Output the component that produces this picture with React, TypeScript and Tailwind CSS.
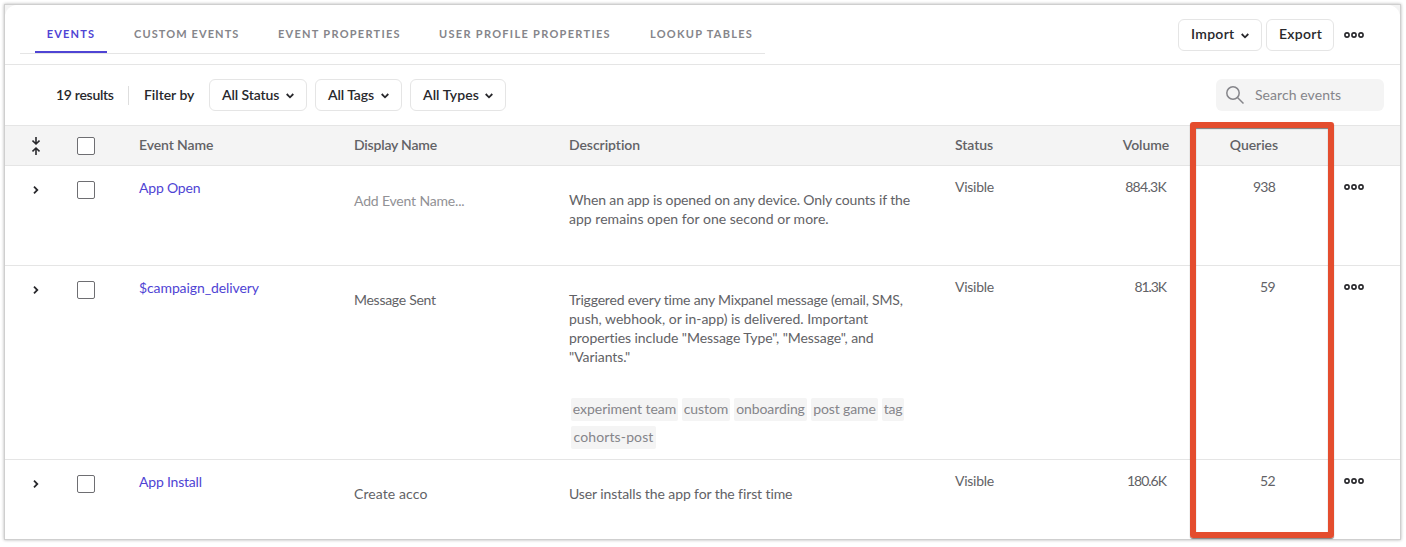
import type { ReactNode } from "react";

const GRID =
  "grid grid-cols-[72px_62px_215px_215px_386px_214px_109px_1fr] leading-[19px]";

function Down() {
  return (
    <svg className="mt-[2px]" width="8" height="6" viewBox="0 0 8 6" fill="none" stroke="#28282c" strokeWidth="1.8">
      <path d="M.7 1 4 4.3 7.3 1" />
    </svg>
  );
}

function Right() {
  return (
    <svg width="6" height="8" viewBox="0 0 6 8" fill="none" stroke="#28282c" strokeWidth="1.8">
      <path d="M1 .7 4.3 4 1 7.3" />
    </svg>
  );
}

function Dots() {
  return (
    <svg width="20" height="6" viewBox="0 0 20 6" fill="none" stroke="#28282c" strokeWidth="1.6">
      <circle cx="3" cy="3" r="2.1" />
      <circle cx="10" cy="3" r="2.1" />
      <circle cx="17" cy="3" r="2.1" />
    </svg>
  );
}

function Collapse() {
  return (
    <svg width="8" height="18" viewBox="0 0 8 18" fill="none" stroke="#28282c" strokeWidth="1.6">
      <path d="M4 0v6.6M.5 3.6 4 7l3.5-3.4M4 18v-6.6M.5 14.4 4 11l3.5 3.4" />
    </svg>
  );
}

function Checkbox() {
  return <span className="block size-[18px] rounded-[2px] border border-[#6e6e72] bg-white" />;
}

function Button({ children, className }: { children: ReactNode; className: string }) {
  return (
    <button
      className={`flex h-8 shrink-0 items-center justify-between rounded-md border border-[#e5e5e5] bg-white px-3 font-semibold whitespace-nowrap text-[#28282c] ${className}`}
    >
      {children}
    </button>
  );
}

const tabs = [
  { label: "EVENTS", className: "w-[72px] mr-[27px] tracking-[1.2px]" },
  { label: "CUSTOM EVENTS", className: "w-[105px] mr-[39px] tracking-[1.1px]" },
  { label: "EVENT PROPERTIES", className: "w-[122px] mr-[39px] tracking-[1.27px]" },
  { label: "USER PROFILE PROPERTIES", className: "w-[172px] mr-[39px] tracking-[1.3px]" },
  { label: "LOOKUP TABLES", className: "w-[103px] tracking-[1.27px]" },
];

interface Label {
  text: string;
  className: string;
}

interface Row {
  name: Label;
  display: Label;
  lines: Label[];
  tags: Label[];
  volume: Label;
  queries: Label;
  className: string;
}

const rows: Row[] = [
  {
    name: { text: "App Open", className: "tracking-[-0.2px]" },
    display: { text: "Add Event Name...", className: "pt-[25px] tracking-[-0.17px] text-[#919195]" },
    lines: [
      { text: "When an app is opened on any device. Only counts if the", className: "tracking-[-0.136px]" },
      { text: "app remains open for one second or more.", className: "tracking-[0.03px]" },
    ],
    tags: [],
    volume: { text: "884.3K", className: "tracking-[-0.7px]" },
    queries: { text: "938", className: "tracking-[-0.8px]" },
    className: "h-[100px] border-b",
  },
  {
    name: { text: "$campaign_delivery", className: "tracking-[-0.1px]" },
    display: { text: "Message Sent", className: "pt-6 tracking-[-0.28px]" },
    lines: [
      { text: "Triggered every time any Mixpanel message (email, SMS,", className: "tracking-[-0.19px]" },
      { text: "push, webhook, or in-app) is delivered. Important", className: "tracking-[0px]" },
      { text: 'properties include "Message Type", "Message", and', className: "tracking-[-0.07px]" },
      { text: '"Variants."', className: "tracking-[-0.06px]" },
    ],
    tags: [
      { text: "experiment team", className: "w-[107px] tracking-[-0.05px]" },
      { text: "custom", className: "w-12 tracking-[-0.05px]" },
      { text: "onboarding", className: "w-[73px] tracking-[-0.1px]" },
      { text: "post game", className: "w-[67px] tracking-[-0.14px]" },
      { text: "tag", className: "w-[22px] tracking-[-0.2px]" },
      { text: "cohorts-post", className: "w-[85px] tracking-[0.13px]" },
    ],
    volume: { text: "81.3K", className: "tracking-[-1.1px]" },
    queries: { text: "59", className: "tracking-[-0.6px]" },
    className: "h-[194px] border-b",
  },
  {
    name: { text: "App Install", className: "tracking-[-0.2px]" },
    display: { text: "Create acco", className: "pt-6 tracking-[0.1px]" },
    lines: [{ text: "User installs the app for the first time", className: "tracking-[-0.1px]" }],
    tags: [],
    volume: { text: "180.6K", className: "tracking-[-1px]" },
    queries: { text: "52", className: "tracking-[-0.6px]" },
    className: "h-[79px]",
  },
];

export default function App() {
  return (
    <div className="h-[547px] w-[1406px] overflow-hidden bg-white px-1 pt-1 font-['Lato',sans-serif] text-sm text-[#626266]">
      <div className="relative h-[536px] w-[1397px] border border-[#cfcfcf] bg-[#f4f4f4] shadow-[0_0_3px_rgba(0,0,0,0.3)]">
        <main className="h-[534px] rounded-t-xl bg-white">
          <header className="flex h-[60px] items-start justify-between border-b border-[#e5e5e5]">
            <nav className="ml-[15px] flex h-[49px] w-[745px] border-b border-[#e5e5e5] pl-[15px] text-[11px] font-bold whitespace-nowrap text-[#85858a]">
              {tabs.map((tab, i) => (
                <span
                  key={tab.label}
                  className={`flex h-12 items-center pt-[11px] ${i === 0 ? "justify-center border-b-2 border-[#4f44d4] text-[#4f44d4]" : "pb-[2px]"} ${tab.className}`}
                >
                  {tab.label}
                </span>
              ))}
            </nav>
            <div className="mt-[14px] mr-9 flex items-center">
              <Button className="w-[84px] tracking-[0.3px]">
                <span className="pb-[2px]">Import</span> <Down />
              </Button>
              <Button className="mr-[10px] ml-1 w-[68px] tracking-[0.3px]">
                <span className="pb-[2px]">Export</span>
              </Button>
              <Dots />
            </div>
          </header>
          <section className="flex h-[61px] items-center border-b border-[#e5e5e5] pl-[51px] font-semibold whitespace-nowrap text-[#28282c]">
            <span className="w-[72px] tracking-[-0.3px]">19 results</span>
            <span className="mr-[15px] h-[19px] w-px bg-[#dedede]" />
            <span className="w-[65px] tracking-[-0.03px]">Filter by</span>
            <div className="flex gap-2">
              <Button className="w-[98px] tracking-[-0.1px]">
                All Status <Down />
              </Button>
              <Button className="w-[87px] tracking-[-0.07px]">
                All Tags <Down />
              </Button>
              <Button className="w-24 tracking-[0.05px]">
                All Types <Down />
              </Button>
            </div>
            <div className="mr-4 ml-auto flex h-8 w-[168px] items-center rounded-md bg-[#f4f4f4] pl-[10px] font-normal tracking-[0.07px] text-[#85858a]">
              <svg width="18" height="18" viewBox="0 0 18 18" fill="none" stroke="#85858a" strokeWidth="1.5">
                <circle cx="7" cy="7" r="6.2" />
                <path d="m11.5 11.5 6 6" />
              </svg>
              <span className="ml-[11px]">Search events</span>
            </div>
          </section>
          <div className={`${GRID} h-10 items-center border-b border-[#e5e5e5] bg-[#f4f4f4] font-semibold`}>
            <span className="pl-[27px]">
              <Collapse />
            </span>
            <Checkbox />
            <span className="pb-[2px] tracking-[-0.1px]">Event Name</span>
            <span className="pb-[2px] tracking-[-0.2px]">Display Name</span>
            <span className="pb-[2px] tracking-[-0.06px]">Description</span>
            <span className="flex justify-between pb-[2px]">
              <span className="tracking-[-0.07px]">Status</span>
              <span className="tracking-[-0.1px]">Volume</span>
            </span>
            <span className="pb-[2px] text-right tracking-[-0.06px]">Queries</span>
          </div>
          {rows.map((row) => (
            <div key={row.name.text} className={`${GRID} items-start border-[#e5e5e5] ${row.className}`}>
              <span className="pt-5 pl-7">
                <Right />
              </span>
              <span className="pt-[15px]">
                <Checkbox />
              </span>
              <span className={`pt-3 text-[#4f44d4] ${row.name.className}`}>{row.name.text}</span>
              <span className={row.display.className}>{row.display.text}</span>
              <div className="pt-6">
                {row.lines.map((line) => (
                  <p key={line.text} className={`whitespace-nowrap ${line.className}`}>
                    {line.text}
                  </p>
                ))}
                {row.tags.length > 0 && (
                  <div className="mt-8 ml-[2px] flex w-[340px] flex-wrap gap-x-1 gap-y-[5px] text-[#85858a]">
                    {row.tags.map((tag) => (
                      <span
                        key={tag.text}
                        className={`flex h-[23px] items-center justify-center rounded-[2px] bg-[#f4f4f4] pb-[2px] whitespace-nowrap ${tag.className}`}
                      >
                        {tag.text}
                      </span>
                    ))}
                  </div>
                )}
              </div>
              <span className="flex justify-between pt-[11px] pr-[3px]">
                <span className="tracking-[-0.27px]">Visible</span>
                <span className={row.volume.className}>{row.volume.text}</span>
              </span>
              <span className={`pt-[11px] pr-[3px] text-right ${row.queries.className}`}>{row.queries.text}</span>
              <span className="pt-[18px] pl-[66px]">
                <Dots />
              </span>
            </div>
          ))}
        </main>
        <div className="absolute top-[117px] left-[1185px] h-[416px] w-36 rounded-[3px] border-6 border-[#e44d2e] shadow-[0_1px_1px_rgba(0,0,0,0.5),inset_0_1px_1px_rgba(0,0,0,0.5)]" />
      </div>
    </div>
  );
}
